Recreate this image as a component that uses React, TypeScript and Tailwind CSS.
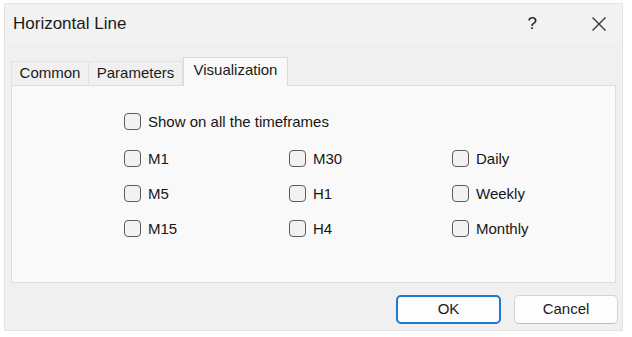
const ROWS = [
  ["M1", "M30", "Daily"],
  ["M5", "H1", "Weekly"],
  ["M15", "H4", "Monthly"],
];

function Check({ label }: { label: string }) {
  return (
    <label className="flex items-center gap-[7px] text-[15px] text-[#161616]">
      <span className="h-[17px] w-[17px] shrink-0 rounded-[4px] border border-[#5c5c5c] bg-[#f2f2f2]" />
      <span className="leading-none">{label}</span>
    </label>
  );
}

export default function App() {
  return (
    <div
      className="h-[337px] w-[632px] bg-white pl-[4px] pt-[3px]"
      style={{ fontFamily: '"Liberation Sans", Arial, sans-serif' }}
    >
      <div className="flex h-[328px] w-[619px] flex-col border border-[#e3e3e3] bg-[#f0f0f0]">
        {/* title bar */}
        <div className="flex h-[40px] items-center bg-[#f2f2f2] pl-[8px] pr-[15px]">
          <span className="text-[17px] text-[#1a1a1a]">Horizontal Line</span>
          <span className="ml-auto mr-[54px] text-[17px] text-[#1a1a1a]">?</span>
          <svg width="16" height="16" viewBox="0 0 16 16" className="text-[#333]">
            <path d="M1.5 1.5 L14.5 14.5 M14.5 1.5 L1.5 14.5" stroke="currentColor" strokeWidth="1.3" fill="none" />
          </svg>
        </div>

        {/* tabs */}
        <div className="mt-[13px] flex items-end px-[6px]">
          <div className="flex h-[24px] w-[78px] items-center justify-center border border-b-0 border-[#e2e2e2] bg-[#f0f0f0] text-[15px] text-[#1a1a1a]">
            Common
          </div>
          <div className="flex h-[24px] w-[94px] items-center justify-center border border-b-0 border-l-0 border-[#e2e2e2] bg-[#f0f0f0] text-[15px] text-[#1a1a1a]">
            Parameters
          </div>
          <div className="relative -mb-px flex h-[29px] w-[105px] items-center justify-center border border-b-0 border-[#dadada] bg-[#f9f9f9] pb-[4px] text-[15px] text-[#1a1a1a]">
            Visualization
          </div>
        </div>

        {/* panel */}
        <div className="mx-[6px] h-[198px] border border-[#dedede] bg-[#f9f9f9] pl-[112px] pt-[27px]">
          <Check label="Show on all the timeframes" />
          <div className="mt-[20px] grid grid-cols-[165px_163px_120px] gap-y-[18px]">
            {ROWS.flat().map((l) => (
              <Check key={l} label={l} />
            ))}
          </div>
        </div>

        {/* buttons */}
        <div className="mt-[12px] flex justify-end gap-[13px] pr-[4px]">
          <button className="h-[29px] w-[105px] rounded-[5px] border-2 border-[#1f78d1] bg-[#fdfdfd] text-[15px] text-[#1a1a1a]">
            OK
          </button>
          <button className="h-[29px] w-[104px] rounded-[5px] border border-[#d3d3d3] border-b-[#bdbdbd] bg-[#fdfdfd] text-[15px] text-[#1a1a1a]">
            Cancel
          </button>
        </div>
      </div>
    </div>
  );
}
